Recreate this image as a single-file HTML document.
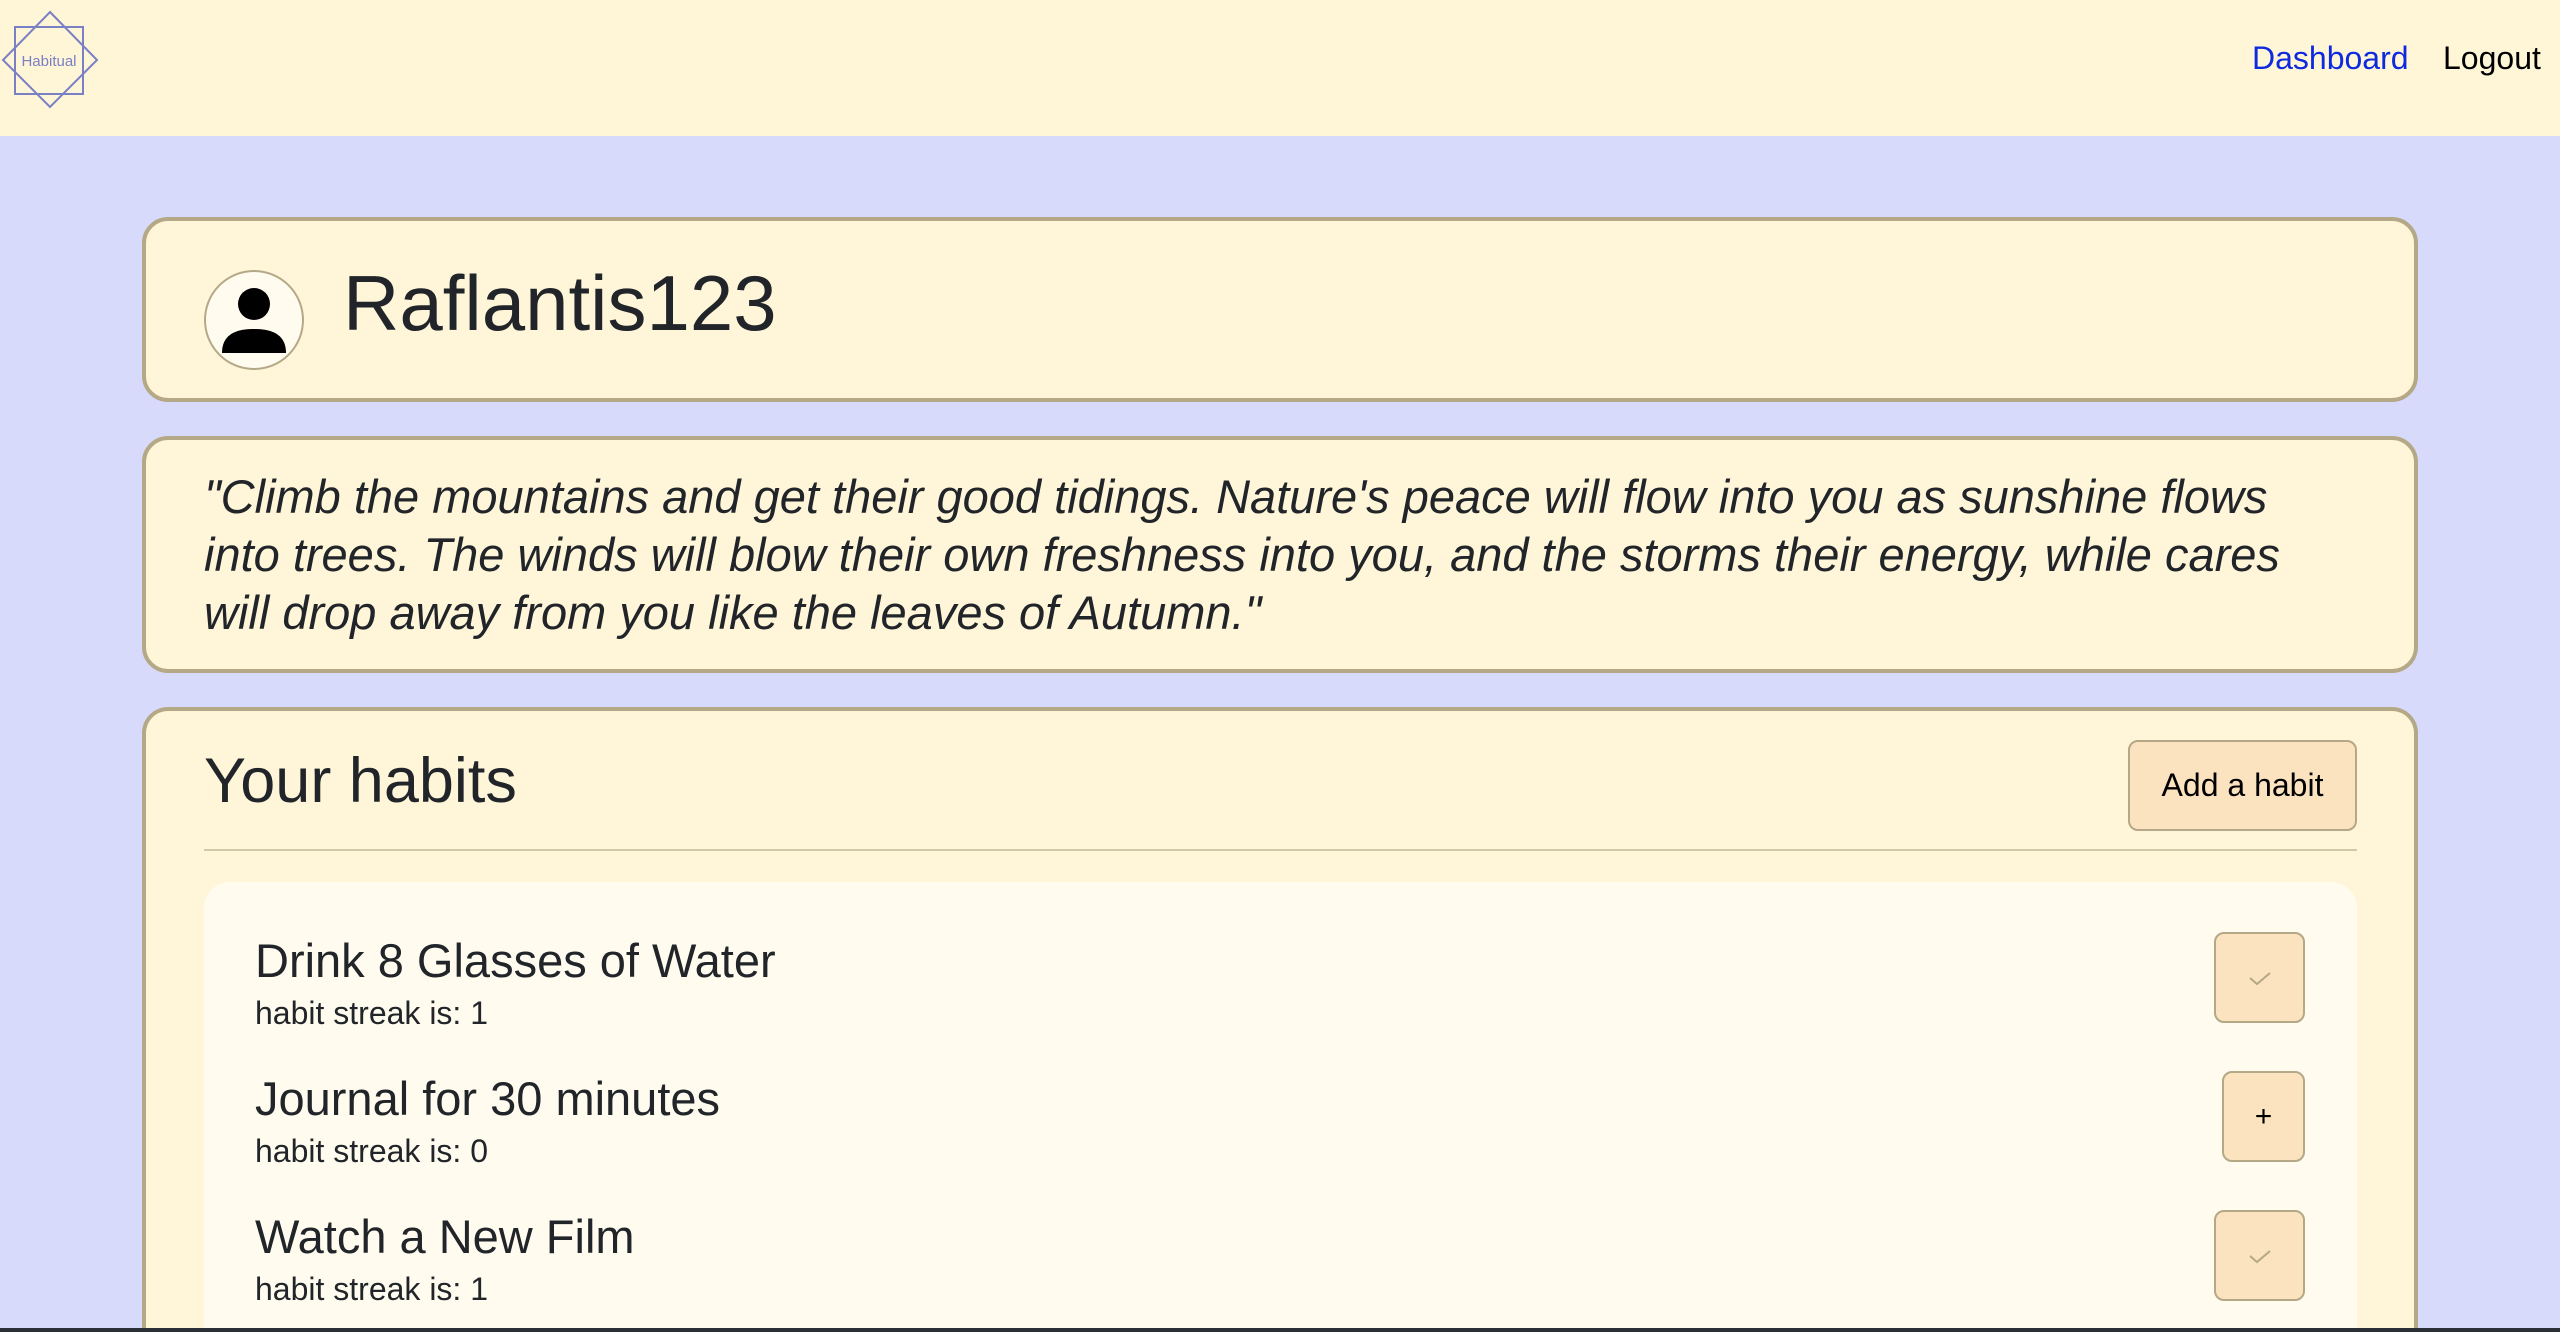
<!DOCTYPE html>
<html style="width:2560px;height:1332px;overflow:hidden"><head><meta charset="utf-8"><style>
*{box-sizing:border-box;margin:0;padding:0}
body{width:2560px;height:1332px;overflow:hidden;background:#d8dafc;font-family:"Liberation Sans",Arial,sans-serif;color:#212529;position:relative}
.hdr{position:absolute;left:0;top:0;width:2560px;height:136px;background:#fff5d7}
.nav{position:absolute;top:36px;font-size:32px;line-height:44px}
.card{position:absolute;left:142px;width:2276px;background:#fff5d9;border:4px solid #b4a886;border-radius:26px;overflow:hidden}
.btn{position:absolute;background:#fce3c0;border:2px solid #b4a886;border-radius:10px;display:flex;align-items:center;justify-content:center}
.t{position:absolute;white-space:nowrap}
</style></head><body>
<div class="hdr">
<svg style="position:absolute;left:0;top:8px" width="104" height="104" viewBox="0 0 104 104">
<rect x="15" y="19" width="68" height="67" fill="none" stroke="#7a80c4" stroke-width="2"/>
<polygon points="50,4 97,52 50,99 3,52" fill="none" stroke="#7a80c4" stroke-width="2"/>
<text x="49" y="58" font-size="15" fill="#7a80c4" text-anchor="middle" font-family="Liberation Sans, sans-serif">Habitual</text>
</svg>
<div class="nav" style="left:2252px;color:#0d2ae0">Dashboard</div>
<div class="nav" style="left:2443px;color:#000">Logout</div>
</div>

<div class="card" style="top:217px;height:185px">
<div style="position:absolute;left:58px;top:49px;width:100px;height:100px;border-radius:50%;background:#fffcef;border:2px solid #b4a886;overflow:hidden">
<svg width="96" height="96" viewBox="0 0 96 96" style="position:absolute;left:0;top:0"><circle cx="48" cy="32" r="16" fill="#000"/><path d="M16 81 C16 60 34 57 48 57 C62 57 80 60 80 81 Z" fill="#000"/></svg>
</div>
<div class="t" style="left:197px;top:32px;font-size:78px;line-height:100px">Raflantis123</div>
</div>

<div class="card" style="top:436px;height:237px">
<div class="t" style="left:58px;top:28px;font-size:47px;line-height:58px;font-style:italic">"Climb the mountains and get their good tidings. Nature's peace will flow into you as sunshine flows<br>into trees. The winds will blow their own freshness into you, and the storms their energy, while cares<br>will drop away from you like the leaves of Autumn."</div>
</div>

<div class="card" style="top:707px;height:625px;border-bottom:none;border-radius:26px 26px 0 0">
<div class="t" style="left:58px;top:30px;font-size:63px;line-height:80px">Your habits</div>
<div class="btn" style="left:1982px;top:29px;width:229px;height:91px;font-size:32px;color:#000">Add a habit</div>
<div style="position:absolute;left:58px;top:138px;width:2153px;height:2px;background:#d2c7a8"></div>
<div style="position:absolute;left:58px;top:171px;width:2153px;height:454px;background:#fffcef;border-radius:26px 26px 0 0">
<div class="t" style="left:51px;top:49px;font-size:47px;line-height:60px">Drink 8 Glasses of Water</div>
<div class="t" style="left:51px;top:111px;font-size:32px;line-height:40px">habit streak is: 1</div>
<div class="t" style="left:51px;top:187px;font-size:47px;line-height:60px">Journal for 30 minutes</div>
<div class="t" style="left:51px;top:249px;font-size:32px;line-height:40px">habit streak is: 0</div>
<div class="t" style="left:51px;top:325px;font-size:47px;line-height:60px">Watch a New Film</div>
<div class="t" style="left:51px;top:387px;font-size:32px;line-height:40px">habit streak is: 1</div>
<div class="btn" style="left:2010px;top:50px;width:91px;height:91px"><svg width="24" height="16" viewBox="0 0 24 16"><path d="M2 8 L9 14 L22 3" fill="none" stroke="#b4a886" stroke-width="2"/></svg></div>
<div class="btn" style="left:2018px;top:189px;width:83px;height:91px;font-size:30px;color:#000">+</div>
<div class="btn" style="left:2010px;top:328px;width:91px;height:91px"><svg width="24" height="16" viewBox="0 0 24 16"><path d="M2 8 L9 14 L22 3" fill="none" stroke="#b4a886" stroke-width="2"/></svg></div>
</div>
</div>
<div style="position:absolute;left:0;top:1328px;width:2560px;height:4px;background:#2a2e36"></div>
</body></html>
